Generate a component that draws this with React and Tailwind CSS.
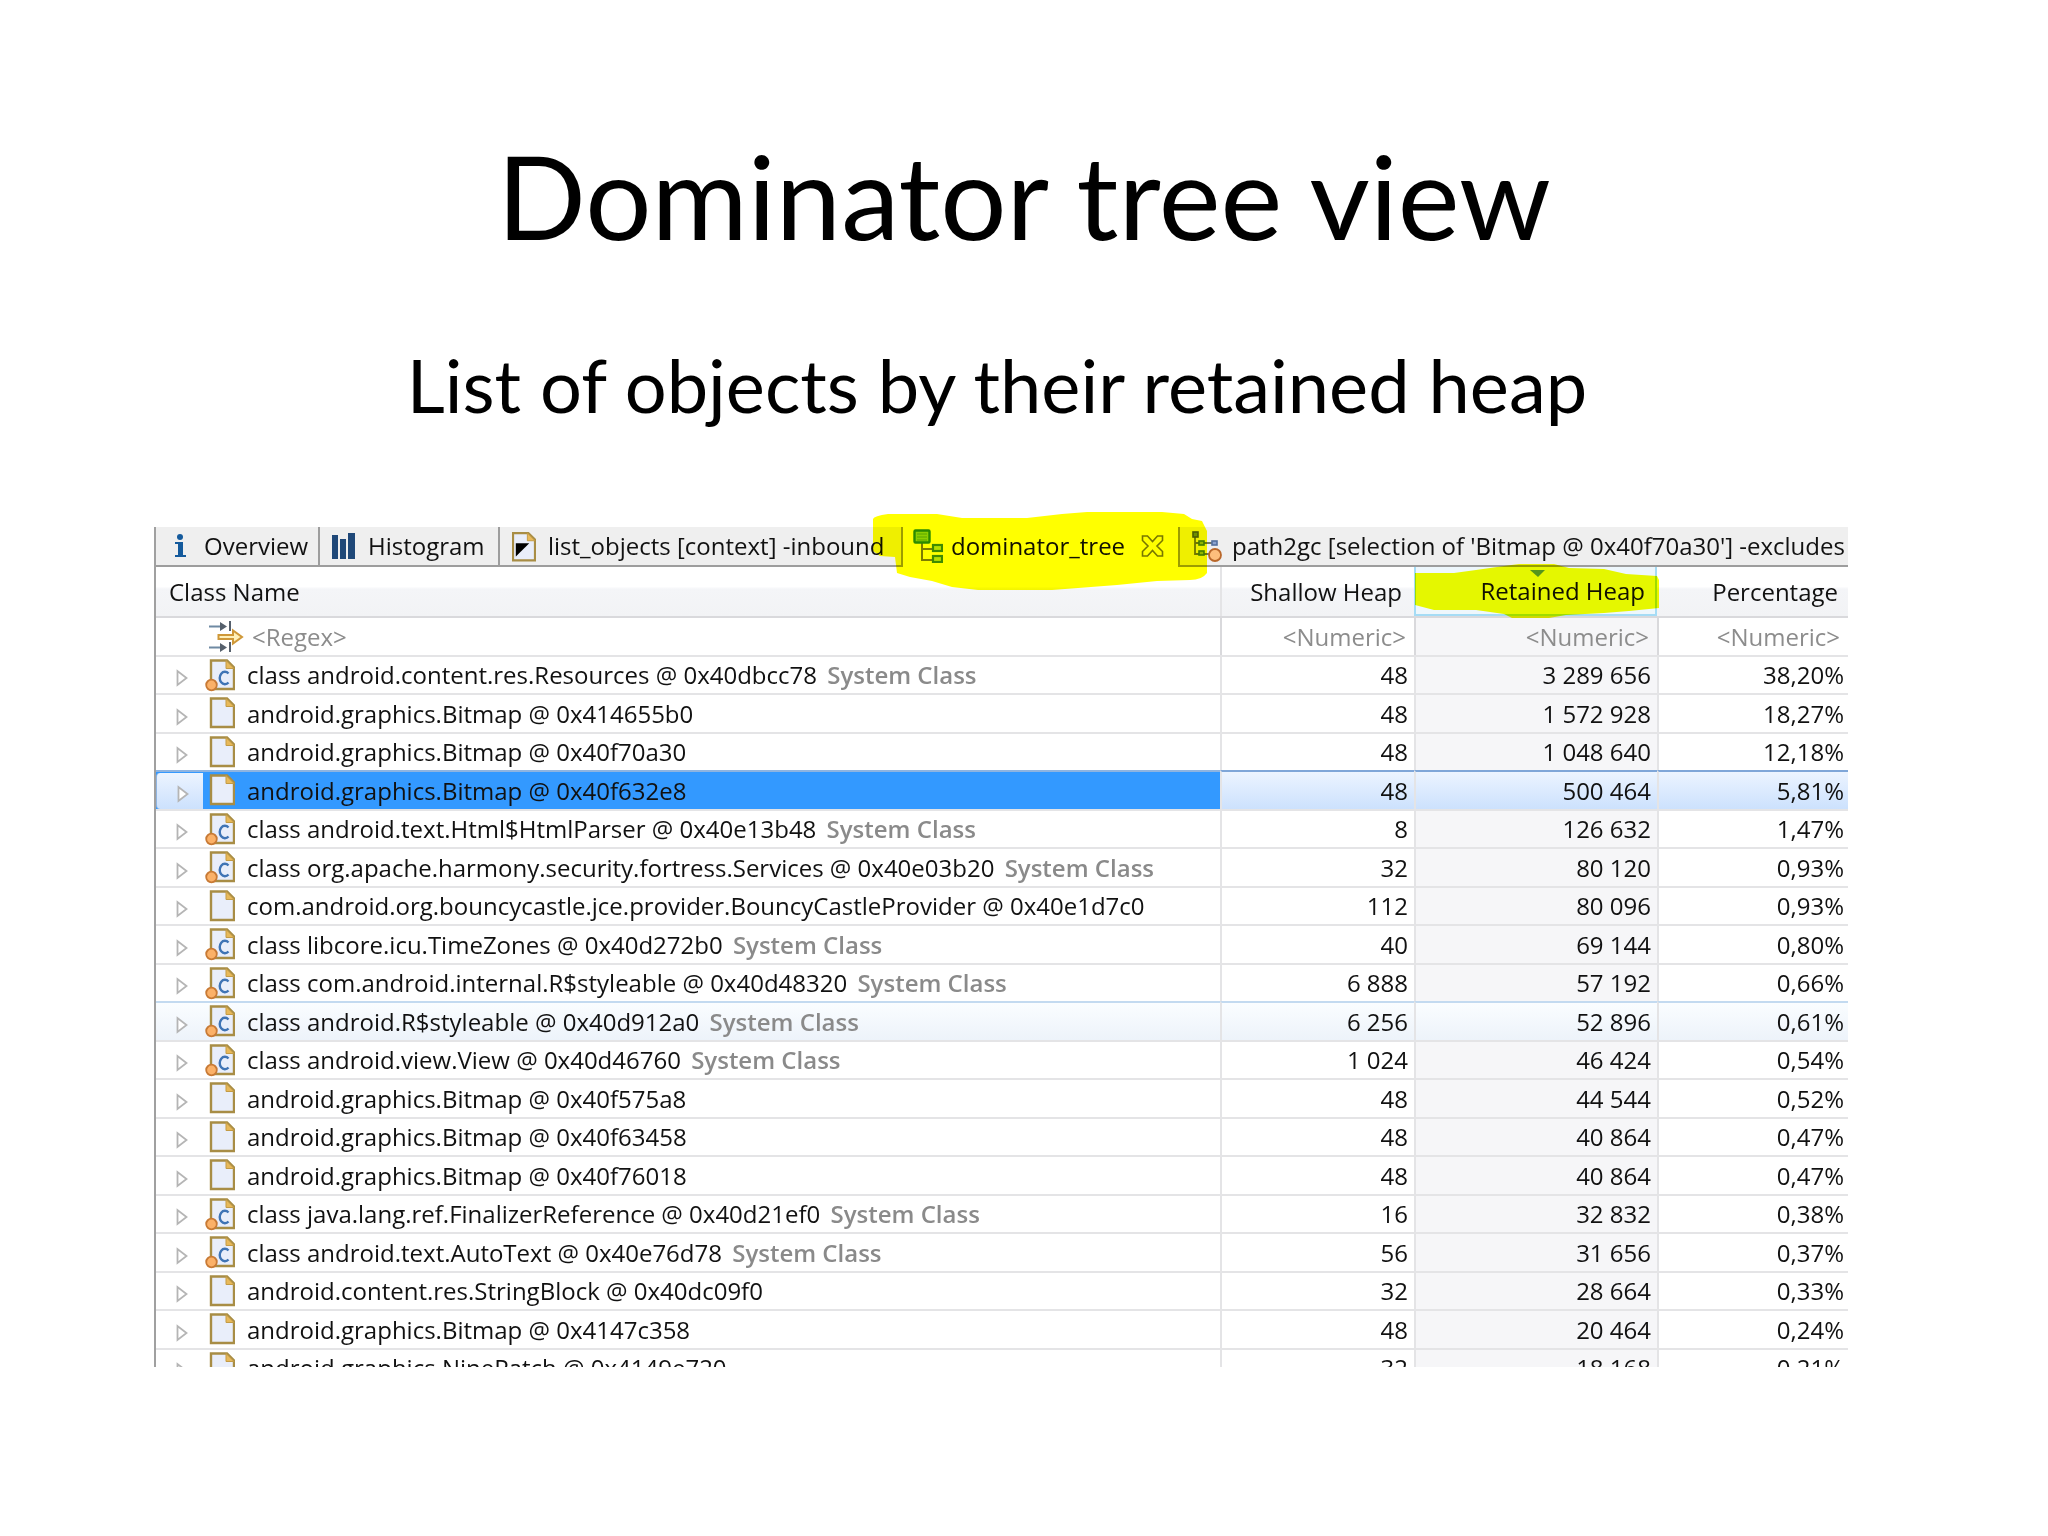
import React from 'react';

const rows = [
  { name: 'class android.content.res.Resources @ 0x40dbcc78', sys: true, shallow: '48', retained: '3 289 656', pct: '38,20%' },
  { name: 'android.graphics.Bitmap @ 0x414655b0', shallow: '48', retained: '1 572 928', pct: '18,27%' },
  { name: 'android.graphics.Bitmap @ 0x40f70a30', shallow: '48', retained: '1 048 640', pct: '12,18%' },
  { name: 'android.graphics.Bitmap @ 0x40f632e8', shallow: '48', retained: '500 464', pct: '5,81%', state: 'selected' },
  { name: 'class android.text.Html$HtmlParser @ 0x40e13b48', sys: true, shallow: '8', retained: '126 632', pct: '1,47%' },
  { name: 'class org.apache.harmony.security.fortress.Services @ 0x40e03b20', sys: true, shallow: '32', retained: '80 120', pct: '0,93%' },
  { name: 'com.android.org.bouncycastle.jce.provider.BouncyCastleProvider @ 0x40e1d7c0', shallow: '112', retained: '80 096', pct: '0,93%' },
  { name: 'class libcore.icu.TimeZones @ 0x40d272b0', sys: true, shallow: '40', retained: '69 144', pct: '0,80%' },
  { name: 'class com.android.internal.R$styleable @ 0x40d48320', sys: true, shallow: '6 888', retained: '57 192', pct: '0,66%' },
  { name: 'class android.R$styleable @ 0x40d912a0', sys: true, shallow: '6 256', retained: '52 896', pct: '0,61%', state: 'hover' },
  { name: 'class android.view.View @ 0x40d46760', sys: true, shallow: '1 024', retained: '46 424', pct: '0,54%' },
  { name: 'android.graphics.Bitmap @ 0x40f575a8', shallow: '48', retained: '44 544', pct: '0,52%' },
  { name: 'android.graphics.Bitmap @ 0x40f63458', shallow: '48', retained: '40 864', pct: '0,47%' },
  { name: 'android.graphics.Bitmap @ 0x40f76018', shallow: '48', retained: '40 864', pct: '0,47%' },
  { name: 'class java.lang.ref.FinalizerReference @ 0x40d21ef0', sys: true, shallow: '16', retained: '32 832', pct: '0,38%' },
  { name: 'class android.text.AutoText @ 0x40e76d78', sys: true, shallow: '56', retained: '31 656', pct: '0,37%' },
  { name: 'android.content.res.StringBlock @ 0x40dc09f0', shallow: '32', retained: '28 664', pct: '0,33%' },
  { name: 'android.graphics.Bitmap @ 0x4147c358', shallow: '48', retained: '20 464', pct: '0,24%' },
  { name: 'android.graphics.NinePatch @ 0x4149e720', shallow: '32', retained: '18 168', pct: '0,21%' }
];

// Cell backgrounds per row state
const nameCell = {
  normal: 'border-t-[#e4e4e6]',
  selected: 'border-t-[#8fb4e0] bg-[#3399ff]',
  hover: 'border-t-[#c3daf0] bg-linear-to-b from-[#fafdff] to-[#edf3fa]'
};
const numberCell = {
  normal: 'border-t-[#e4e4e6]',
  selected: 'border-t-[#7fa6d8] bg-linear-to-b from-[#ecf4ff] to-[#cce1fd]',
  hover: 'border-t-[#c3daf0] bg-linear-to-b from-[#fafdff] to-[#edf3fa]'
};

function InfoIcon() {
  return (
    <svg className="w-6 h-7 shrink-0" viewBox="0 0 24 28" fill="#145a9c">
      <circle cx="12" cy="5" r="3" />
      <path d="M7 10h8v13h3v2H7v-2h3V12H7z" />
    </svg>
  );
}

function HistogramIcon() {
  return (
    <svg className="w-6 h-7 shrink-0" viewBox="0 0 24 28" fill="#1f4878">
      <rect x="0" y="3" width="6" height="24" />
      <rect x="8" y="7" width="6" height="20" />
      <rect x="16" y="1" width="7" height="26" />
    </svg>
  );
}

function Page() {
  return (
    <>
      <path d="M8 1.5h16l7 7V30H8z" fill="#e9eefa" stroke="#a88d45" strokeWidth="2.4" />
      <path d="M23 1.5v8h8z" fill="#e8b95a" stroke="#c39b45" strokeWidth="1" />
    </>
  );
}

function ListIcon() {
  return (
    <svg className="w-6 h-[31px] shrink-0" viewBox="7 0 25 31">
      <Page />
      <path d="M11 12h14L11 26z" fill="#000" />
    </svg>
  );
}

function TreeIcon() {
  return (
    <svg className="w-[30px] h-[34px] shrink-0" viewBox="0 0 30 34">
      <path d="M9 14v17h11M9 20h11" fill="none" stroke="#7d7d3c" strokeWidth="2" />
      <rect x="1.5" y="1.5" width="15" height="12" rx="1" fill="#8ccf66" stroke="#2b8a1e" strokeWidth="2.4" />
      <path d="M4 5h10M4 8h10M4 11h10" stroke="#5aa648" strokeWidth="1" />
      <rect x="20" y="16" width="9" height="6" fill="#b5df62" stroke="#3f8a1e" strokeWidth="2.2" />
      <rect x="20" y="27" width="9" height="6" fill="#b5df62" stroke="#3f8a1e" strokeWidth="2.2" />
    </svg>
  );
}

function CloseIcon() {
  return (
    <svg className="w-[23px] h-[22px]" viewBox="0 0 23 22" fill="none" stroke="#77774a" strokeWidth="1.6">
      <path d="M1.5 1h5l5 5.500 5-5.500h5v4.500L16 11l5.500 5.500V21h-5l-5-5.500-5 5.500h-5v-4.500L7 11 1.500 5.500z" />
    </svg>
  );
}

function PathIcon() {
  return (
    <svg className="w-[30px] h-[31px] shrink-0" viewBox="0 0 30 31">
      <path d="M3 6v17h15M3 12h18" fill="none" stroke="#6f7768" strokeWidth="1.8" />
      <rect x="1" y="1" width="5" height="5" fill="#6f8f4a" stroke="#4d5d3a" strokeWidth="1.6" />
      <rect x="7" y="10" width="5" height="4" fill="#8fb455" stroke="#3f7a2a" strokeWidth="1.6" />
      <rect x="20" y="10" width="5" height="4" fill="#8ba3cf" stroke="#54709f" strokeWidth="1.6" />
      <rect x="7" y="20" width="5" height="4" fill="#8fb455" stroke="#3f7a2a" strokeWidth="1.6" />
      <circle cx="23" cy="24" r="6" fill="#fdbe7c" stroke="#b9672a" strokeWidth="1.8" />
    </svg>
  );
}

function FilterIcon() {
  return (
    <svg className="w-[35px] h-8 shrink-0" viewBox="0 0 35 32">
      <path d="M0 5.500h14M0 26.500h14" stroke="#6f8aa3" strokeWidth="2" />
      <path d="M11 1l7 4.500-7 4.500zM11 22l7 4.500-7 4.500z" fill="#56606c" />
      <path d="M21 0v10M21 21v10" stroke="#56606c" strokeWidth="2" />
      <path d="M9.500 14H24V9.500l9 6.500-9 6.500V18H9.500z" fill="#fff0b8" stroke="#cf9838" strokeWidth="2" />
    </svg>
  );
}

function ObjectIcon({ isClass }) {
  return (
    <svg className="w-8 h-[33px] shrink-0" viewBox="0 0 32 33">
      <Page />
      {isClass && (
        <>
          <path d="M25.5 14.5A5.200 6.200 0 1 0 25.500 23.500" fill="none" stroke="#3f74b5" strokeWidth="2.400" />
          <circle cx="8.500" cy="26" r="5.300" fill="#fbb168" stroke="#c87a35" strokeWidth="1.800" />
        </>
      )}
    </svg>
  );
}

function Expander() {
  return (
    <button type="button" aria-label="Expand" className="w-3 h-[18px] shrink-0 mt-[6px]">
      <svg className="w-3 h-[18px]" viewBox="0 0 12 18" fill="#fff" stroke="#b5b5b5" strokeWidth="1.8">
        <path d="M1.500 2v14L10.500 9z" />
      </svg>
    </button>
  );
}

function Tab({ icon, label, className = '' }) {
  return (
    <button
      type="button"
      role="tab"
      className={`flex items-center shrink-0 whitespace-nowrap bg-[#efefef] border-b-2 border-[#9d9d9d] ${className}`}
    >
      {icon}
      <span>{label}</span>
    </button>
  );
}

function Row({ row }) {
  const state = row.state || 'normal';
  const num = `border-t-2 border-l-2 border-l-[#e4e4e6] text-right ${numberCell[state]}`;
  return (
    <tr className="odd:h-[38px] even:h-[39px]">
      <td className={`border-t-2 ${nameCell[state]}`}>
        <div className="flex items-center h-9">
          <div
            className={`flex items-center h-9 w-[47px] pl-5 shrink-0 ${
              state === 'selected' ? 'bg-linear-to-b from-[#ecf4ff] to-[#cce1fd] border-l border-[#8fb4e0] rounded-l' : ''
            }`}
          >
            <Expander />
          </div>
          <ObjectIcon isClass={row.sys} />
          <span className="pl-3 whitespace-nowrap">
            {row.name}
            {row.sys && <b className="ml-1 font-semibold text-[#8a8a8a]"> System Class</b>}
          </span>
        </div>
      </td>
      <td className={`${num} pr-[6px]`}>{row.shallow}</td>
      <td className={`${num} pr-[6px] ${state === 'normal' ? 'bg-[#f6f6f8]' : ''}`}>{row.retained}</td>
      <td className={`${num} pr-1`}>{row.pct}</td>
    </tr>
  );
}

function NumericFilter({ label }) {
  return (
    <input
      type="text"
      aria-label={label}
      placeholder="<Numeric>"
      className="w-full h-9 bg-transparent text-right pr-2 placeholder:text-[#8c8c8c] outline-none"
    />
  );
}

export default function App() {
  return (
    <main className="min-h-screen bg-white text-black overflow-hidden">
      <h1 className="pt-[127px] text-center font-[Lato,sans-serif] text-[117px] leading-[136px]">
        Dominator tree view
      </h1>
      <p className="pt-[78px] pr-[54px] text-center font-[Lato,sans-serif] text-[74px] leading-[88px]">
        List of objects by their retained heap
      </p>

      <section className="relative mt-[98px] ml-[154px] mr-[200px] font-['Open_Sans',sans-serif] text-[24px] leading-7 text-[#111]">
        <div className="h-[840px] overflow-hidden border-l-2 border-[#a0a0a0]">
          {/* Editor tabs */}
          <div role="tablist" className="flex h-10">
            <Tab icon={<InfoIcon />} label="Overview" className="w-[164px] pl-3 gap-3 border-r-2" />
            <Tab icon={<HistogramIcon />} label="Histogram" className="w-[180px] pl-3 gap-3 border-r-2" />
            <Tab icon={<ListIcon />} label="list_objects [context] -inbound" className="w-[403px] pl-3 gap-3 border-r-2" />
            <div className="flex items-center w-[275px] pl-[10px] pb-[2px] shrink-0">
              <button type="button" role="tab" aria-selected="true" className="flex items-center gap-2 whitespace-nowrap">
                <TreeIcon />
                <span>dominator_tree</span>
              </button>
              <button type="button" aria-label="Close" className="ml-4">
                <CloseIcon />
              </button>
            </div>
            <Tab
              icon={<PathIcon />}
              label="path2gc [selection of 'Bitmap @ 0x40f70a30'] -excludes"
              className="w-[670px] pl-3 gap-[10px] border-l-2 overflow-hidden"
            />
          </div>

          <table className="w-full table-fixed border-separate border-spacing-0">
            <colgroup>
              <col />
              <col className="w-[194px]" />
              <col className="w-[243px]" />
              <col className="w-[191px]" />
            </colgroup>
            <thead className="[&_th]:p-0 [&_th]:font-normal">
              <tr className="h-[49px] bg-linear-to-b from-white from-40% via-[#f4f5f8] via-45% to-[#f2f3f5]">
                <th className="text-left">
                  <div className="pl-[13px]">Class Name</div>
                </th>
                <th className="text-right border-l-2 border-[#e4e4e6]">
                  <div className="pr-3">Shallow Heap</div>
                </th>
                <th aria-sort="descending" className="text-right border-x-2 border-b-2 border-[#a5dcf5] bg-[#eef7fc]">
                  <div className="pr-[10px]">Retained Heap</div>
                </th>
                <th className="text-right">
                  <div className="pr-[10px]">Percentage</div>
                </th>
              </tr>
              <tr className="h-[39px] [&_th]:border-t-2 [&_th]:border-[#d9d9dc]">
                <th>
                  <div className="flex items-center pl-[53px] gap-2">
                    <FilterIcon />
                    <input
                      type="text"
                      aria-label="Filter by class name"
                      placeholder="<Regex>"
                      className="h-9 bg-transparent placeholder:text-[#8c8c8c] outline-none"
                    />
                  </div>
                </th>
                <th className="border-l-2">
                  <NumericFilter label="Filter by shallow heap" />
                </th>
                <th className="border-l-2 bg-[#f6f6f8]">
                  <NumericFilter label="Filter by retained heap" />
                </th>
                <th className="border-l-2">
                  <NumericFilter label="Filter by percentage" />
                </th>
              </tr>
            </thead>
            <tbody className="[&_td]:py-0 [&_td]:pl-0">
              {rows.map((row) => (
                <Row key={row.name} row={row} />
              ))}
            </tbody>
          </table>
        </div>

        {/* Marker strokes over the active tab and the sorted column */}
        <svg className="absolute left-[718px] -top-4 w-[335px] h-[80px] mix-blend-multiply pointer-events-none" viewBox="0 0 335 80">
          <path
            d="M1 8Q2 5 16 3L65 3 90 7 155 7 190 3 215 1H290L312 3 320 8 330 10 335 20V62Q330 69 318 69L285 70 245 74 180 79H106L80 76 60 70 38 66 25 62 23 46 8 45 1 40Z"
            fill="#ffff00"
          />
        </svg>
        <svg className="absolute right-[188px] top-[37px] w-[246px] h-[56px] mix-blend-multiply pointer-events-none" viewBox="0 0 246 56">
          <path
            d="M1 9L40 9 62 6 90 2 105 0H140L155 4 190 5 212 10 243 12 245 16V44L215 47 190 49 152 51 135 54H98L90 50 62 46 20 46 1 41Z"
            fill="#f6ff00"
          />
          <path d="M116 6h15l-7 7z" fill="#5b9a1c" />
        </svg>
      </section>
    </main>
  );
}
